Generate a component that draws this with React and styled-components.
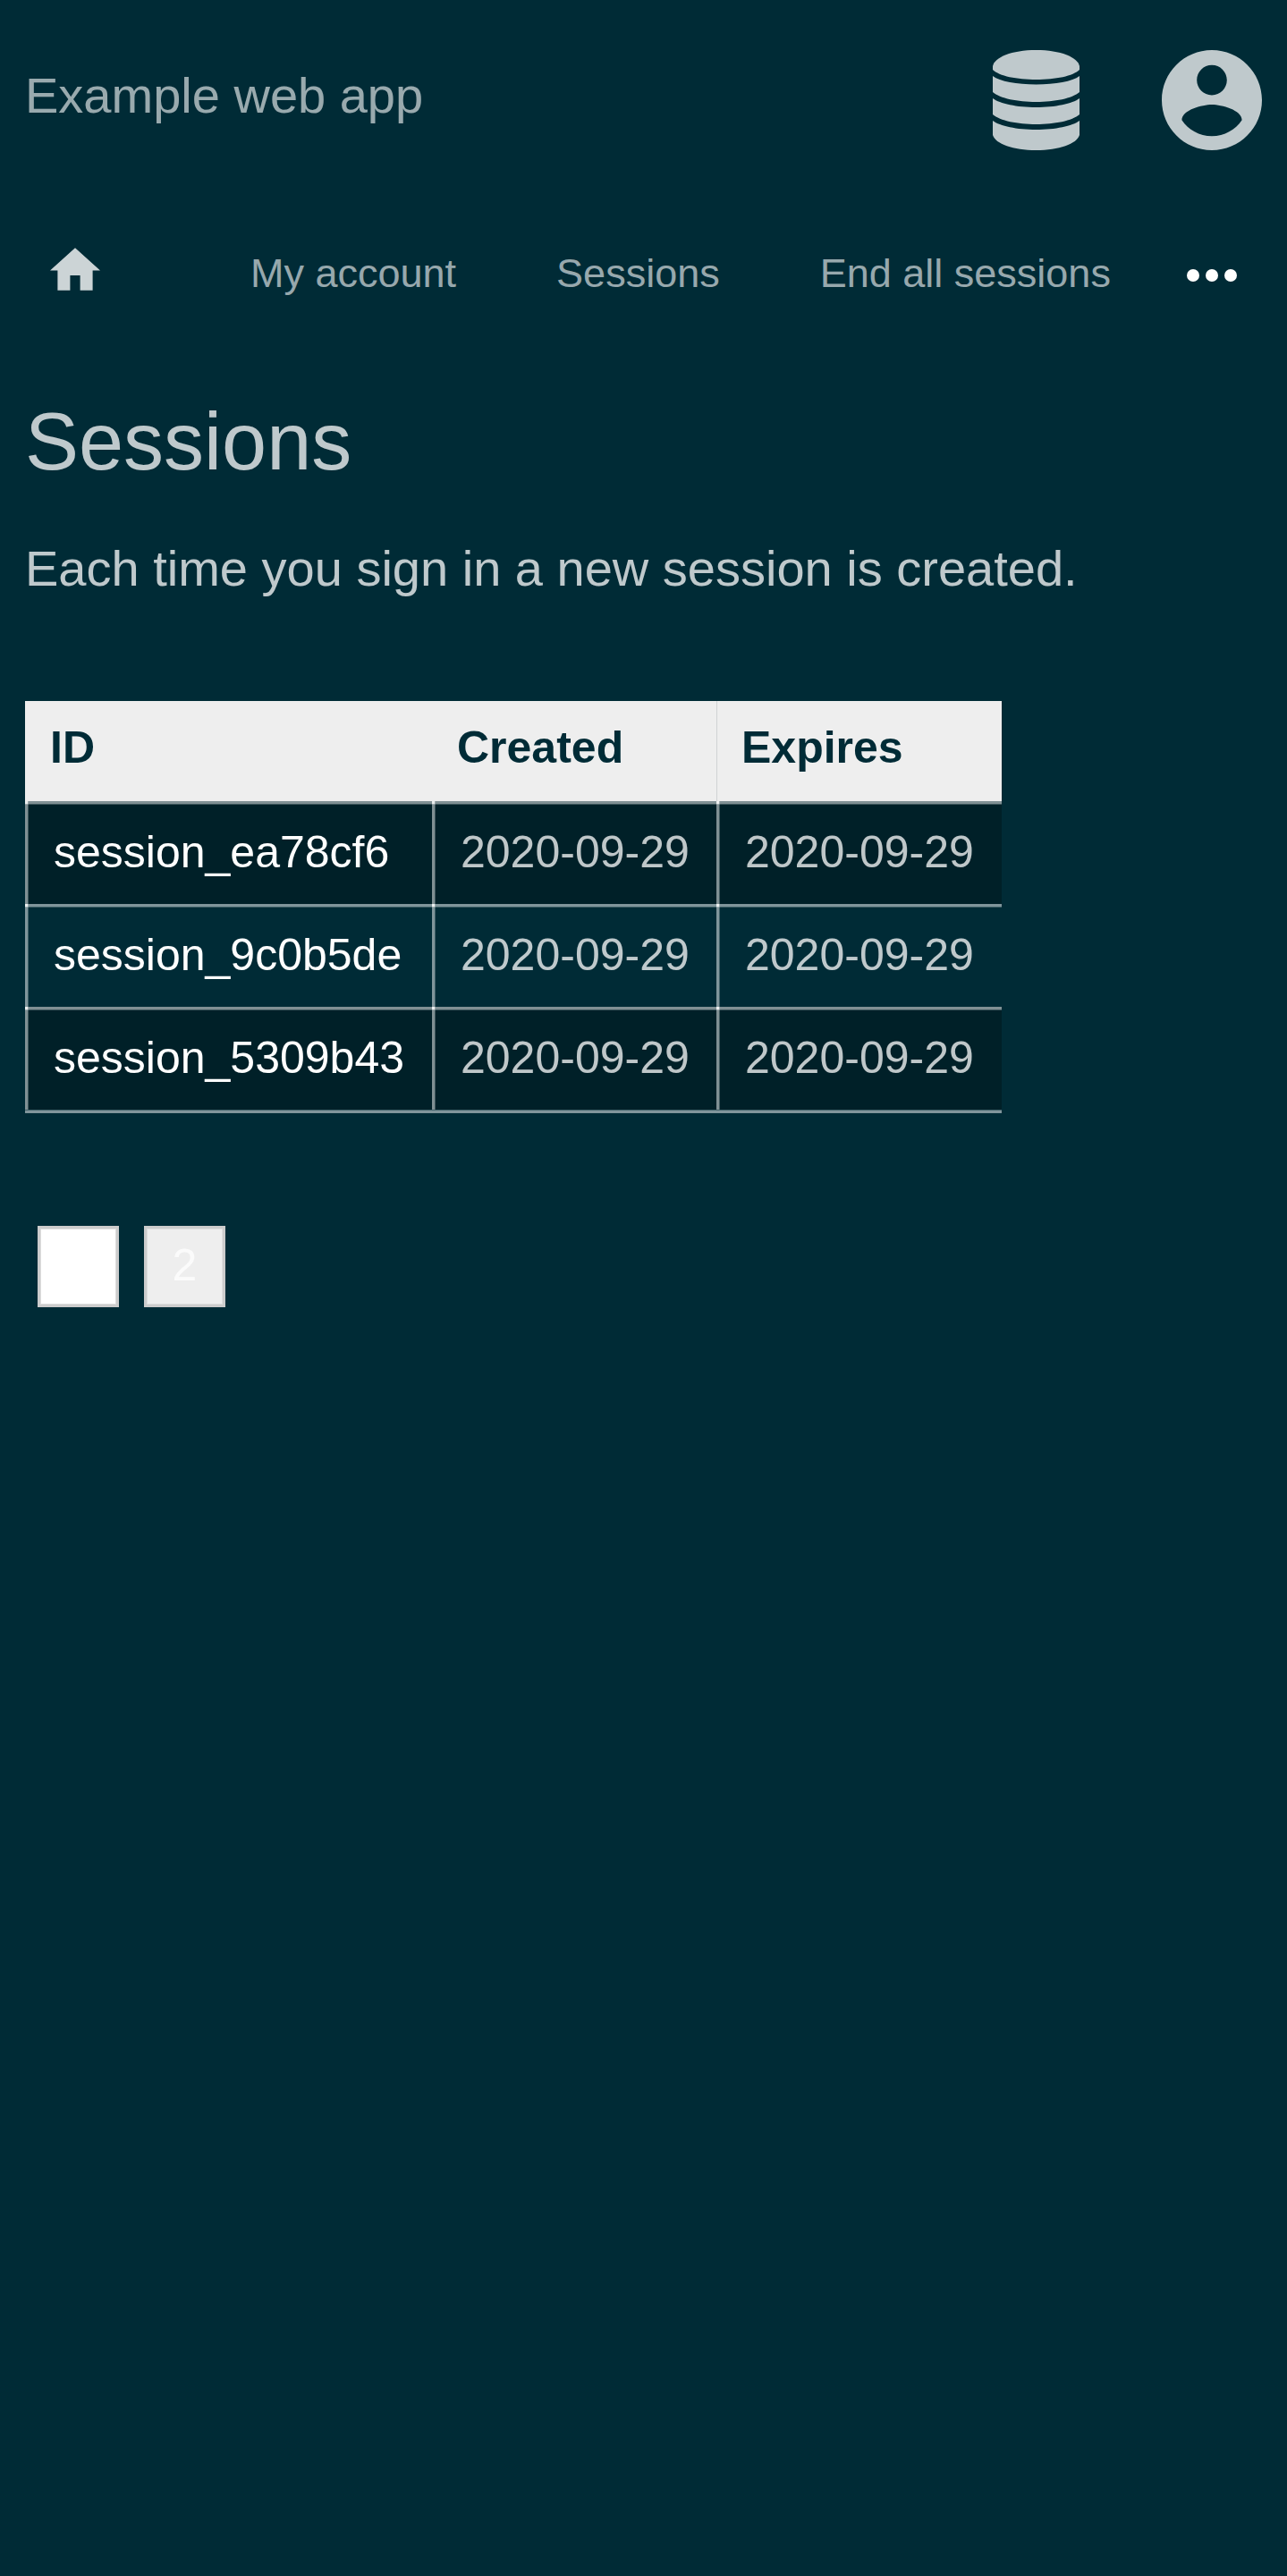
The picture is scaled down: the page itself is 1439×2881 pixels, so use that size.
import React from "react";
import styled, { createGlobalStyle } from "styled-components";

const GlobalStyle = createGlobalStyle`
  *, *::before, *::after { box-sizing: border-box; }
  html { background: #002b36; }
  body {
    margin: 0;
    background: #002b36;
    color: rgba(255, 255, 255, 0.75);
    font-family: "Liberation Sans", Arial, sans-serif;
    font-size: 56px;
  }
`;

const Header = styled.header`
  display: flex;
  justify-content: space-between;
  align-items: flex-start;
  padding: 56px 28px;
`;

const Brand = styled.a`
  color: rgba(255, 255, 255, 0.6);
  line-height: 102px;
  text-decoration: none;
`;

const Actions = styled.div`
  display: flex;
  gap: 92px;
`;

const IconLink = styled.a`
  display: flex;
  color: rgba(255, 255, 255, ${(p) => p.$strength || 0.75});
`;

const Icon = styled.svg`
  display: block;
  width: ${(p) => p.$w}px;
  height: ${(p) => p.$h}px;
  fill: currentColor;
`;

const Nav = styled.nav`
  display: flex;
  align-items: center;
  justify-content: space-between;
  height: 168px;
  padding: 0 56px;
`;

const NavItems = styled.div`
  display: flex;
  align-items: center;
  gap: 112px;
`;

const HomeItem = styled.div`
  margin-right: 56px;
  padding-bottom: 14px;
`;

const NavLink = styled.a`
  padding-bottom: 4px;
  color: rgba(255, 255, 255, 0.6);
  font-size: 45px;
  line-height: 56px;
  text-decoration: none;
  white-space: nowrap;
`;

const MoreButton = styled.button`
  display: flex;
  padding: 0;
  border: 0;
  background: none;
  color: #fff;
`;

const Main = styled.main`
  padding: 36px 28px;
`;

const Title = styled.h1`
  margin: 0;
  font-size: 90px;
  font-weight: 400;
  line-height: 132px;
`;

const Lead = styled.p`
  margin: 36px 0 108px;
  line-height: 80px;
`;

const Table = styled.table`
  border-collapse: separate;
  border-spacing: 0;
  font-size: 50px;
  line-height: 56px;
  text-align: left;
`;

const HeadCell = styled.th`
  width: ${(p) => p.$w}px;
  height: 112px;
  padding: 0 28px 8px;
  background: #eee;
  color: #002b36;
  box-shadow: ${(p) => (p.$divided ? "inset 1px 0 #d0d3d4" : "none")};
`;

const line = "rgba(255, 255, 255, 0.5) 3px, rgba(255, 255, 255, 0.25) 3px";

const Row = styled.tr`
  background: ${(p) => (p.$shaded ? "#002028" : "transparent")};
`;

const Cell = styled.td`
  height: 115px;
  padding: 0 28px 2px 32px;
  background-image:
    linear-gradient(rgba(255, 255, 255, 0.7), rgba(255, 255, 255, 0.7)),
    linear-gradient(to right, ${line}),
    linear-gradient(to bottom, ${line});
  background-size: 3px 3px, 4px 100%, 100% 4px;
  background-repeat: no-repeat;
`;

const EndRule = styled.td`
  height: 4px;
  padding: 0;
  background: linear-gradient(to top, ${line});
`;

const SessionLink = styled.a`
  color: #fff;
  text-decoration: none;
`;

const Pager = styled.nav`
  display: flex;
  gap: 28px;
  margin-top: 126px;
  padding: 0 14px;
`;

const PageLink = styled.a`
  width: 91px;
  height: 91px;
  border: 3px solid #ccc;
  background: ${(p) => (p.$current ? "#fff" : "#eee")};
  box-shadow: inset 0 0 0 1px #ddd;
  color: ${(p) => (p.$current ? "#fff" : "#fbfbfb")};
  font-size: 50px;
  line-height: 82px;
  text-align: center;
  text-decoration: none;
`;

const sessions = [
  { id: "session_ea78cf6", created: "2020-09-29", expires: "2020-09-29" },
  { id: "session_9c0b5de", created: "2020-09-29", expires: "2020-09-29" },
  { id: "session_5309b43", created: "2020-09-29", expires: "2020-09-29" },
];

export default function App() {
  return (
    <>
      <GlobalStyle />
      <Header>
        <Brand href="#">Example web app</Brand>
        <Actions>
          <IconLink href="#data" aria-label="Data">
            <Icon $w={97} $h={112} viewBox="0 0 97 112" aria-hidden="true">
              <path d="M0 18C2 8 21 0 48.500 0S95 8 97 18V22C90 29 70 33 48.500 33S7 29 0 22Z" />
              <path d="M0 29C8 35 27 38.500 48.500 38.500S89 35 97 29V47C89 54 69 58 48.500 58S8 54 0 47Z" />
              <path d="M0 54C8 60 27 64 48.500 64S89 60 97 54V72C89 79 69 83 48.500 83S8 79 0 72Z" />
              <path d="M0 79C8 85 27 89 48.500 89S89 85 97 79V95C94 105 74 112 48.500 112S3 105 0 95Z" />
            </Icon>
          </IconLink>
          <IconLink href="#account" aria-label="Account">
            <Icon $w={112} $h={112} viewBox="2 2 20 20" aria-hidden="true">
              <path d="M12 2C6.480 2 2 6.480 2 12s4.480 10 10 10 10-4.480 10-10S17.520 2 12 2zm0 3c1.660 0 3 1.340 3 3s-1.340 3-3 3-3-1.340-3-3 1.340-3 3-3zm0 14.200c-2.500 0-4.710-1.280-6-3.220.030-1.990 4-3.080 6-3.080 1.990 0 5.970 1.090 6 3.080-1.290 1.940-3.500 3.220-6 3.220z" />
            </Icon>
          </IconLink>
        </Actions>
      </Header>
      <Nav aria-label="Main">
        <NavItems>
          <HomeItem>
            <IconLink href="#home" aria-label="Home" $strength={0.8}>
              <Icon $w={56} $h={48} viewBox="2 3 20 17" aria-hidden="true">
                <path d="M10 20v-6h4v6h5v-8h3L12 3 2 12h3v8z" />
              </Icon>
            </IconLink>
          </HomeItem>
          <NavLink href="#account">My account</NavLink>
          <NavLink href="#sessions">Sessions</NavLink>
          <NavLink href="#end">End all sessions</NavLink>
        </NavItems>
        <MoreButton type="button" aria-label="More">
          <Icon $w={56} $h={14} viewBox="0 0 56 14" aria-hidden="true">
            <circle cx="7" cy="7" r="7" />
            <circle cx="28" cy="7" r="7" />
            <circle cx="49" cy="7" r="7" />
          </Icon>
        </MoreButton>
      </Nav>
      <Main>
        <Title>Sessions</Title>
        <Lead>Each time you sign in a new session is created.</Lead>
        <Table>
          <thead>
            <tr>
              <HeadCell scope="col" $w={455}>ID</HeadCell>
              <HeadCell scope="col" $w={318}>Created</HeadCell>
              <HeadCell scope="col" $w={319} $divided>Expires</HeadCell>
            </tr>
          </thead>
          <tbody>
            {sessions.map((s, i) => (
              <Row key={s.id} $shaded={i % 2 === 0}>
                <Cell>
                  <SessionLink href={"#" + s.id}>{s.id}</SessionLink>
                </Cell>
                <Cell>{s.created}</Cell>
                <Cell>{s.expires}</Cell>
              </Row>
            ))}
          </tbody>
          <tfoot>
            <tr>
              <EndRule colSpan={3} />
            </tr>
          </tfoot>
        </Table>
        <Pager aria-label="Pages">
          <PageLink href="#page-1" aria-current="page" $current>1</PageLink>
          <PageLink href="#page-2">2</PageLink>
        </Pager>
      </Main>
    </>
  );
}
